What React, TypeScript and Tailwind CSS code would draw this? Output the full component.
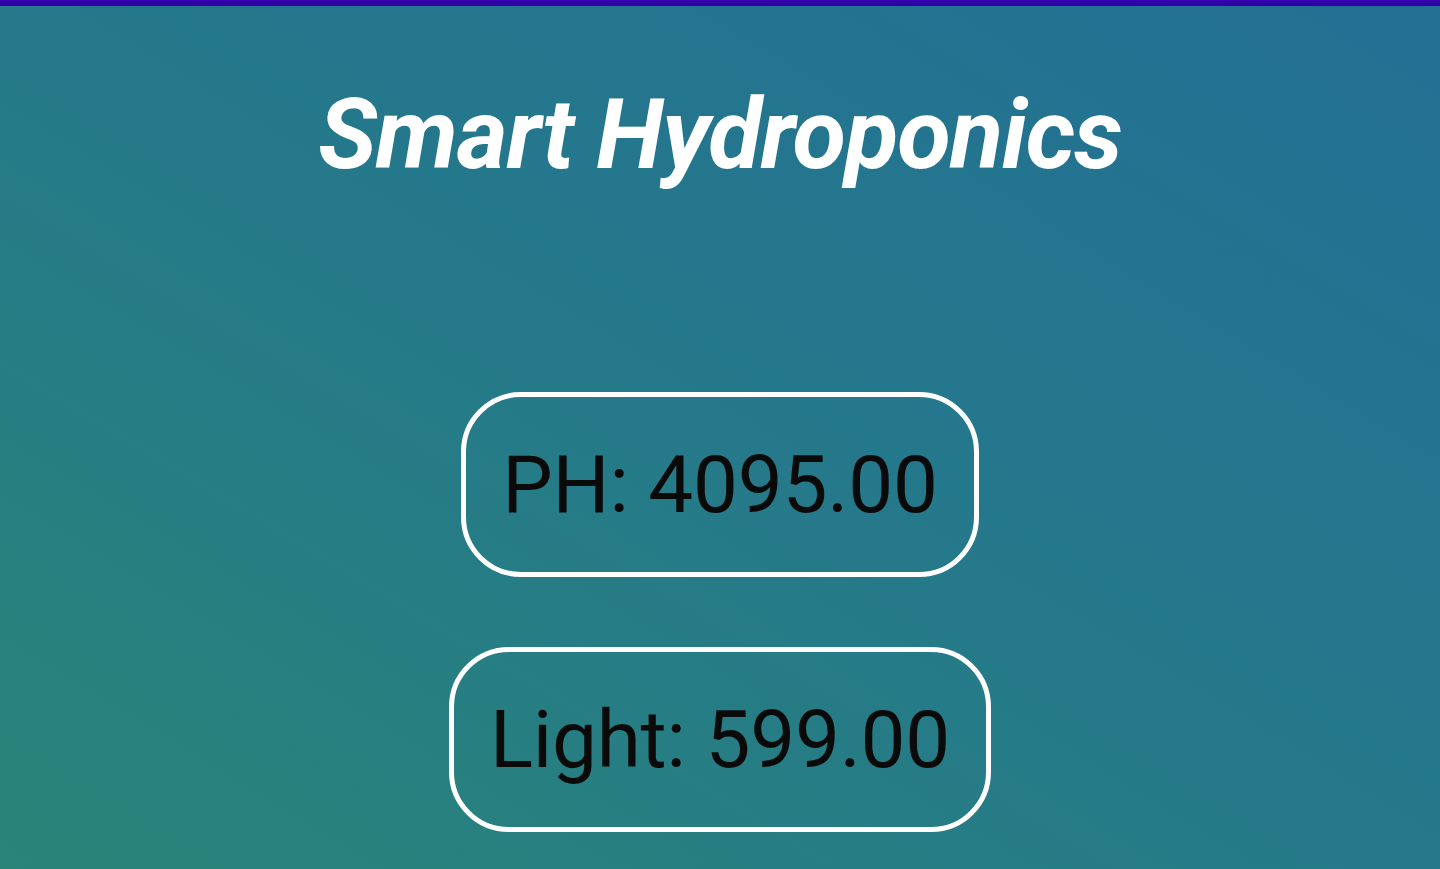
import React from 'react'

export default function App() {
  return (
    <main className="min-h-[869px] w-full bg-gradient-to-tr from-[#2a8478] via-[#25798a] to-[#236f95] font-['Roboto',sans-serif]">
      <div className="h-[6px] w-full bg-[#3200a8]" />

      <h1 className="mt-[80px] text-center text-[98px] font-bold italic leading-none tracking-[-1.2px] text-white">
        Smart Hydroponics
      </h1>

      <section className="mt-[208px] flex flex-col items-center gap-[70px]">
        <Reading label="PH" value="4095.00" />
        <Reading label="Light" value="599.00" />
      </section>
    </main>
  )
}

const Reading = ({ label, value }: { label: string; value: string }) => {
  return (
    <div className="flex h-[185px] items-center rounded-[60px] border-[5px] border-white px-[36px]">
      <span className="text-[80px] leading-none tracking-[-0.2px] text-[#0a0a0a]">
        {label}: {value}
      </span>
    </div>
  )
}
